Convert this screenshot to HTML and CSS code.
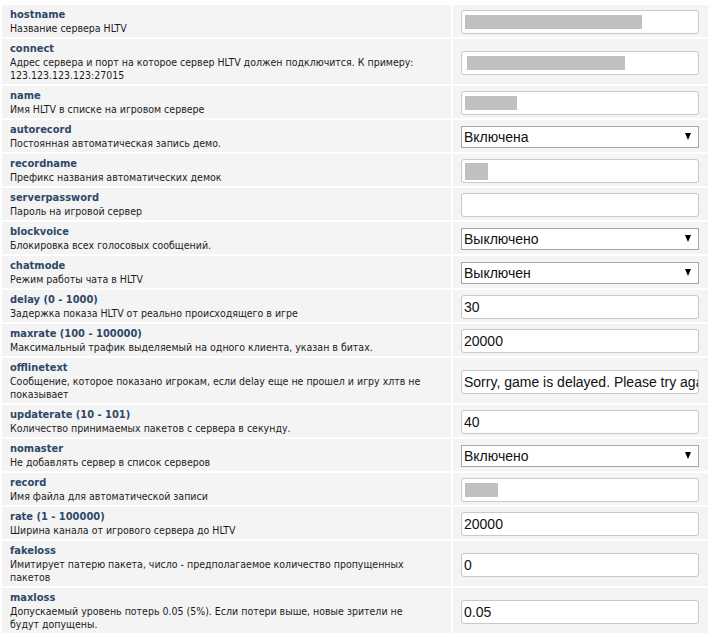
FILE: index.html
```html
<!DOCTYPE html>
<html>
<head>
<meta charset="utf-8">
<link rel="stylesheet" href="styles.css">
</head>
<body>
<table class="cfg">
<tr><td class="info"><div class="key">hostname</div><div class="desc">Название сервера HLTV</div></td>
<td class="val"><div class="field"><span class="mask" style="width:177px"></span></div></td></tr>
<tr><td class="info"><div class="key">connect</div><div class="desc">Адрес сервера и порт на которое сервер HLTV должен подключится. К примеру:<br>123.123.123.123:27015</div></td>
<td class="val"><div class="field"><span class="mask wide" style="width:158px"></span></div></td></tr>
<tr><td class="info"><div class="key">name</div><div class="desc">Имя HLTV в списке на игровом сервере</div></td>
<td class="val"><div class="field"><span class="mask" style="width:52px"></span></div></td></tr>
<tr><td class="info"><div class="key">autorecord</div><div class="desc">Постоянная автоматическая запись демо.</div></td>
<td class="val"><div class="select">Включена<span class="arrow"></span></div></td></tr>
<tr><td class="info"><div class="key">recordname</div><div class="desc">Префикс названия автоматических демок</div></td>
<td class="val"><div class="field"><span class="mask tall" style="width:23px"></span></div></td></tr>
<tr><td class="info"><div class="key">serverpassword</div><div class="desc">Пароль на игровой сервер</div></td>
<td class="val"><div class="field"></div></td></tr>
<tr><td class="info"><div class="key">blockvoice</div><div class="desc">Блокировка всех голосовых сообщений.</div></td>
<td class="val"><div class="select">Выключено<span class="arrow"></span></div></td></tr>
<tr><td class="info"><div class="key">chatmode</div><div class="desc">Режим работы чата в HLTV</div></td>
<td class="val"><div class="select">Выключен<span class="arrow"></span></div></td></tr>
<tr><td class="info"><div class="key">delay (0 - 1000)</div><div class="desc">Задержка показа HLTV от реально происходящего в игре</div></td>
<td class="val"><div class="field">30</div></td></tr>
<tr><td class="info"><div class="key">maxrate (100 - 100000)</div><div class="desc">Максимальный трафик выделяемый на одного клиента, указан в битах.</div></td>
<td class="val"><div class="field">20000</div></td></tr>
<tr><td class="info"><div class="key">offlinetext</div><div class="desc">Сообщение, которое показано игрокам, если delay еще не прошел и игру хлтв не<br>показывает</div></td>
<td class="val"><div class="field">Sorry, game is delayed. Please try again later.</div></td></tr>
<tr><td class="info"><div class="key">updaterate (10 - 101)</div><div class="desc">Количество принимаемых пакетов с сервера в секунду.</div></td>
<td class="val"><div class="field">40</div></td></tr>
<tr><td class="info"><div class="key">nomaster</div><div class="desc">Не добавлять сервер в список серверов</div></td>
<td class="val"><div class="select">Включено<span class="arrow"></span></div></td></tr>
<tr><td class="info"><div class="key">record</div><div class="desc">Имя файла для автоматической записи</div></td>
<td class="val"><div class="field"><span class="mask" style="width:33px"></span></div></td></tr>
<tr><td class="info"><div class="key">rate (1 - 100000)</div><div class="desc">Ширина канала от игрового сервера до HLTV</div></td>
<td class="val"><div class="field">20000</div></td></tr>
<tr><td class="info"><div class="key">fakeloss</div><div class="desc">Имитирует патерю пакета, число - предполагаемое количество пропущенных<br>пакетов</div></td>
<td class="val"><div class="field">0</div></td></tr>
<tr><td class="info"><div class="key">maxloss</div><div class="desc">Допускаемый уровень потерь 0.05 (5%). Если потери выше, новые зрители не<br>будут допущены.</div></td>
<td class="val"><div class="field">0.05</div></td></tr>
</table>
</body>
</html>
```
FILE: styles.css
```css
html, body {
  margin: 0;
  padding: 0;
  background: #ffffff;
}
body {
  padding-top: 3px;
}
.cfg {
  border-collapse: separate;
  border-spacing: 2px;
  width: 709px;
  table-layout: fixed;
}
.cfg td {
  background: #f4f4f4;
  vertical-align: middle;
}
.info {
  width: 433px;
  padding: 2px 8px 2px 8px;
}
.val {
  width: 238px;
  padding: 0 9px 0 8px;
}
.key {
  font-family: "DejaVu Sans Condensed", "DejaVu Sans", sans-serif;
  font-weight: bold;
  font-size: 11px;
  line-height: 15px;
  color: #2e4868;
  white-space: nowrap;
}
.desc {
  font-family: "DejaVu Sans Condensed", "DejaVu Sans", sans-serif;
  font-size: 10.5px;
  line-height: 13px;
  color: #1c1c1c;
  white-space: nowrap;
}
.field {
  box-sizing: border-box;
  height: 24px;
  border: 1px solid #c9c9c9;
  border-radius: 3px;
  background: #ffffff;
  padding: 0 2px;
  margin: 2px 0 0 0;
  font-family: "Liberation Sans", Arial, sans-serif;
  font-size: 14px;
  line-height: 22px;
  color: #111111;
  white-space: nowrap;
  overflow: hidden;
  display: flex;
  align-items: center;
}
.mask {
  display: block;
  height: 14px;
  background: #c0c0c0;
  margin-left: 1px;
}
.mask.wide {
  margin-left: 3px;
}
.mask.tall {
  height: 17px;
}
.select {
  box-sizing: border-box;
  height: 22px;
  border: 1px solid #a6a6a6;
  background: #ffffff;
  padding: 0 2px;
  margin: 1px 0 0 0;
  font-family: "Liberation Sans", Arial, sans-serif;
  font-size: 14px;
  line-height: 20px;
  color: #111111;
  display: flex;
  align-items: center;
  justify-content: space-between;
}
.arrow {
  width: 0;
  height: 0;
  border-left: 3.5px solid transparent;
  border-right: 3.5px solid transparent;
  border-top: 7px solid #000000;
  margin-right: 5px;
}
```
